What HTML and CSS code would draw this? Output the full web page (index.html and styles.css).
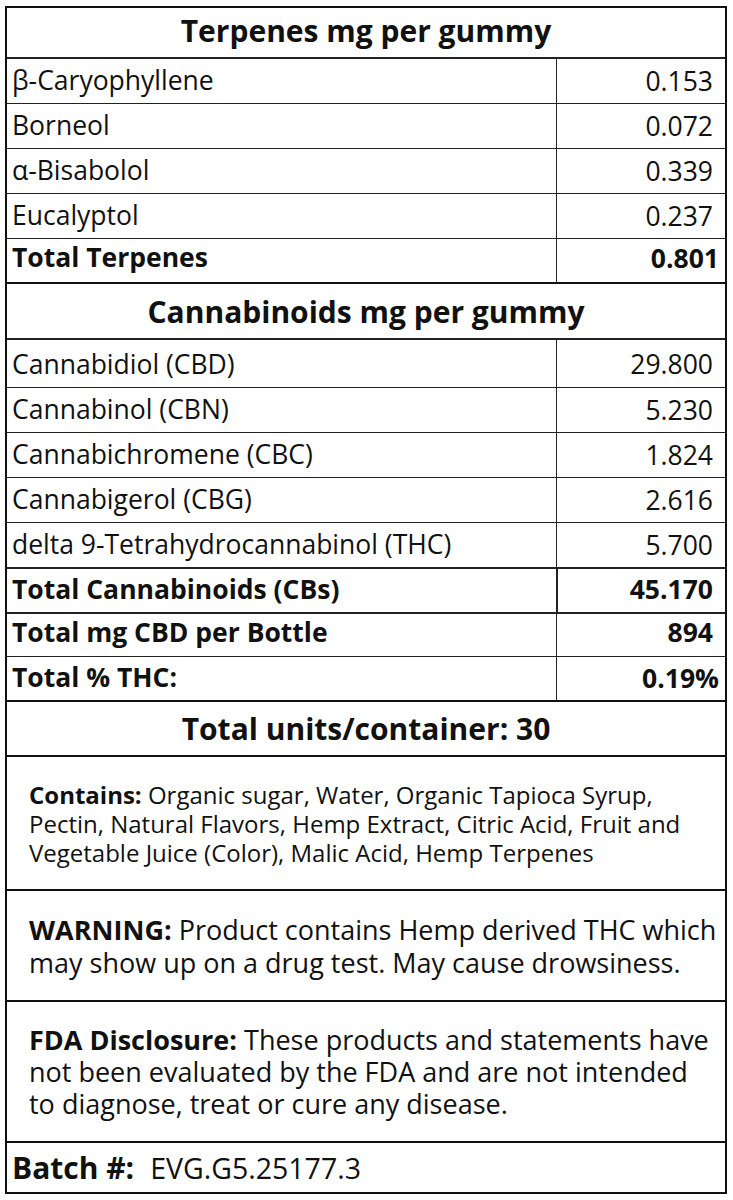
FILE: index.html
```html
<!DOCTYPE html>
<html lang="en">
<head>
<meta charset="utf-8">
<title>Supplement Facts</title>
<link rel="stylesheet" href="styles.css">
</head>
<body>
<div class="label">
  <div class="heading h-terp">Terpenes mg per gummy</div>
  <div class="row r-first"><div class="name">β-Caryophyllene</div><div class="val">0.153</div></div>
  <div class="row"><div class="name">Borneol</div><div class="val">0.072</div></div>
  <div class="row"><div class="name">α-Bisabolol</div><div class="val">0.339</div></div>
  <div class="row"><div class="name">Eucalyptol</div><div class="val">0.237</div></div>
  <div class="row r-total bold"><div class="name">Total Terpenes</div><div class="val val-wide">0.801</div></div>

  <div class="heading h-cann">Cannabinoids mg per gummy</div>
  <div class="row r-cbd"><div class="name">Cannabidiol (CBD)</div><div class="val">29.800</div></div>
  <div class="row"><div class="name">Cannabinol (CBN)</div><div class="val">5.230</div></div>
  <div class="row"><div class="name">Cannabichromene (CBC)</div><div class="val">1.824</div></div>
  <div class="row"><div class="name">Cannabigerol (CBG)</div><div class="val">2.616</div></div>
  <div class="row"><div class="name">delta 9-Tetrahydrocannabinol (THC)</div><div class="val">5.700</div></div>
  <div class="row r-boxed bold"><div class="name">Total Cannabinoids (CBs)</div><div class="val">45.170</div></div>
  <div class="row r-short r-thick r-raise bold"><div class="name">Total mg CBD per Bottle</div><div class="val">894</div></div>
  <div class="row r-short bold"><div class="name">Total % THC:</div><div class="val val-wide">0.19%</div></div>

  <div class="heading h-units">Total units/container: 30</div>

  <div class="note n-contains"><p><b>Contains:</b> Organic sugar, Water, Organic Tapioca Syrup,<br>Pectin, Natural Flavors, Hemp Extract, Citric Acid, Fruit and<br>Vegetable Juice (Color), Malic Acid, Hemp Terpenes</p></div>
  <div class="note n-warning"><p><b>WARNING:</b> Product contains Hemp derived THC which<br>may show up on a drug test. May cause drowsiness.</p></div>
  <div class="note n-fda"><p><b>FDA Disclosure:</b> These products and statements have<br>not been evaluated by the FDA and are not intended<br>to diagnose, treat or cure any disease.</p></div>

  <div class="batch"><b>Batch #:</b><span class="batch-no">EVG.G5.25177.3</span></div>
</div>
</body>
</html>
```
FILE: styles.css
```css
html, body {
  margin: 0;
  padding: 0;
  background: #fff;
}
body {
  font-family: "Open Sans", "Noto Sans", "Liberation Sans", sans-serif;
  color: #111;
}
.label {
  box-sizing: border-box;
  width: 722px;
  margin: 6px 0 0 5px;
  border: 2px solid #111;
  display: flex;
  flex-direction: column;
}
.heading {
  box-sizing: border-box;
  display: flex;
  align-items: center;
  justify-content: center;
  font-weight: 700;
  font-size: 30px;
  border-top: 2px solid #111;
}
.h-terp { height: 49px; border-top: 0; padding-bottom: 4px; }
.h-cann { height: 56px; }
.h-units { height: 55px; }

.row {
  box-sizing: border-box;
  height: 45px;
  display: grid;
  grid-template-columns: 549px 1fr;
  border-top: 1px solid #222;
  font-size: 26.5px;
  padding-bottom: 3px;
}
.row .name {
  display: flex;
  align-items: center;
  padding-left: 5px;
  white-space: nowrap;
}
.row .val {
  display: flex;
  align-items: center;
  justify-content: flex-end;
  padding-right: 12px;
  border-left: 1px solid #222;
  margin-bottom: -3px;
  padding-bottom: 1px;
}
.bold { font-weight: 700; }
.r-first { height: 46px; border-top-width: 2px; }
.r-total { height: 44px; padding-bottom: 7px; }
.r-total .val { margin-bottom: -7px; padding-bottom: 6px; }
.r-cbd { height: 49px; border-top-width: 2px; padding-bottom: 0; }
.r-cbd .val { margin-bottom: 0; padding-bottom: 0; }
.r-boxed { border-top-width: 2px; padding-bottom: 4px; }
.r-boxed .val { border-left-width: 2px; margin-bottom: -4px; padding-bottom: 4px; }
.r-short { height: 44px; }
.r-thick { border-top-width: 2px; }
.r-raise { padding-bottom: 6px; }
.r-raise .val { margin-bottom: -6px; padding-bottom: 6px; }
.row .val.val-wide { padding-right: 6px; }

.note {
  box-sizing: border-box;
  border-top: 2px solid #111;
  display: flex;
  align-items: center;
  padding: 0 4px 0 22px;
  white-space: nowrap;
}
.note p { margin: 0; }
.n-contains { height: 134px; font-size: 24px; line-height: 29px; }
.n-warning { height: 111px; font-size: 27px; line-height: 33px; }
.n-fda { height: 141px; font-size: 27px; line-height: 32px; }

.batch {
  box-sizing: border-box;
  height: 51px;
  border-top: 2px solid #111;
  display: flex;
  align-items: center;
  padding-left: 5px;
  font-size: 28.5px;
}
.batch b { font-size: 30px; }
.batch-no { margin-left: 16px; }
```
